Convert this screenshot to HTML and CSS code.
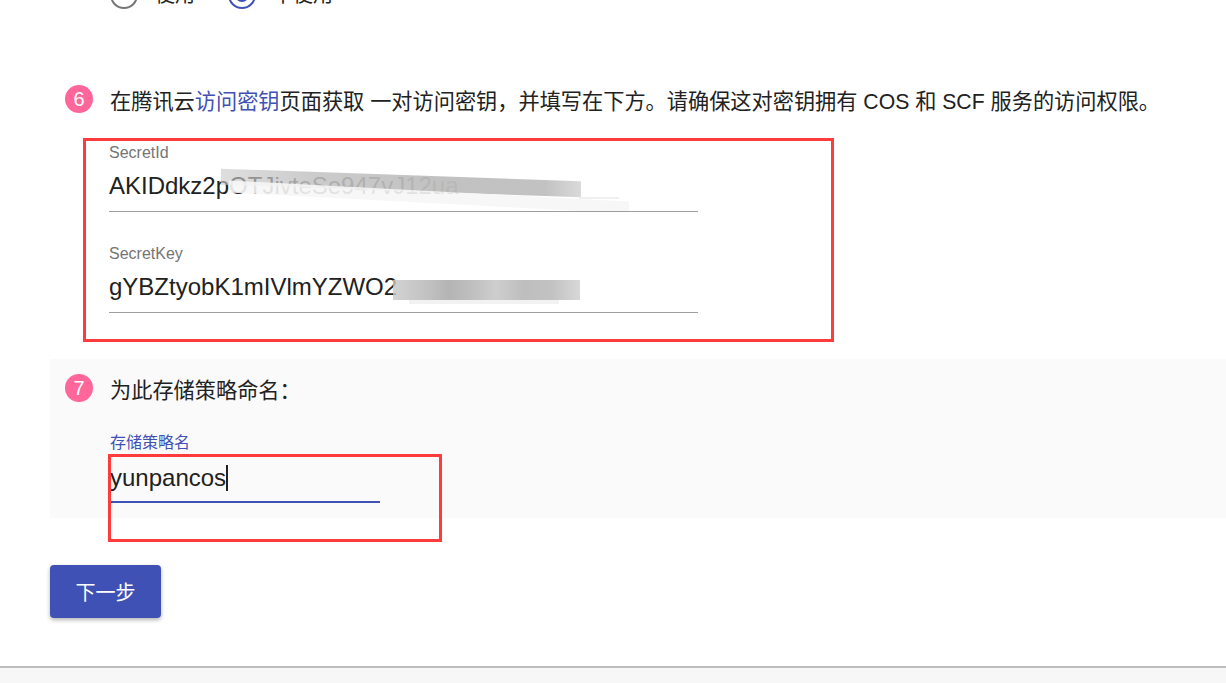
FILE: index.html
```html
<!DOCTYPE html>
<html lang="zh-CN">
<head>
  <meta charset="UTF-8">
  <title>存储策略</title>
  <link rel="stylesheet" href="styles.css">
</head>
<body>
<div class="page">
  <div class="radio-row">
    <label class="radio"><span class="radio-dot"></span>使用</label>
    <label class="radio checked"><span class="radio-dot"></span>不使用</label>
  </div>

  <div class="step step-keys">
    <div class="step-head">
      <span class="badge">6</span>
      <span class="step-title">在腾讯云<a href="#" class="link">访问密钥</a>页面获取 一对访问密钥，并填写在下方。请确保这对密钥拥有 COS 和 SCF 服务的访问权限。</span>
    </div>
    <div class="mark-box">
      <div class="field wide">
        <div class="field-label">SecretId</div>
        <div class="field-input">
          AKIDdkz2pOTJivteSe947vJ12ua
          <span class="smear smear-a"></span>
          <span class="smear smear-b"></span>
          <span class="smear smear-c"></span>
        </div>
      </div>
      <div class="field wide second">
        <div class="field-label">SecretKey</div>
        <div class="field-input">
          gYBZtyobK1mIVlmYZWO2
          <span class="smear smear-d"></span>
          <span class="smear smear-e"></span>
        </div>
      </div>
    </div>
  </div>

  <div class="step step-name">
    <div class="step-head">
      <span class="badge">7</span>
      <span class="step-title">为此存储策略命名：</span>
    </div>
    <div class="field narrow focused">
      <div class="field-label">存储策略名</div>
      <div class="field-input">yunpancos<span class="caret"></span></div>
      <span class="mark-overlay"></span>
    </div>
  </div>

  <button class="btn-next">下一步</button>
</div>
<footer class="bottom"></footer>
</body>
</html>
```

FILE: styles.css
```css
html, body {
  margin: 0;
  padding: 0;
  background: #fff;
  color: #212121;
  font-family: "Liberation Sans", "Noto Sans CJK SC", sans-serif;
  overflow: hidden;
  height: 100%;
}
.page {
  display: flow-root;
  padding-left: 50px;
  height: 666px;
  box-sizing: border-box;
}

/* radio row, mostly scrolled off the top */
.radio-row {
  display: flex;
  gap: 33px;
  margin-left: 60px;
  margin-top: -19px;
  height: 28px;
  font-size: 20px;
  line-height: 28px;
}
.radio {
  display: flex;
  align-items: center;
  gap: 17px;
  color: #212121;
}
.radio-dot {
  width: 28px;
  height: 28px;
  border: 2px solid #757575;
  border-radius: 50%;
  box-sizing: border-box;
  position: relative;
}
.radio.checked .radio-dot {
  border-color: #3f51b5;
}
.radio.checked .radio-dot::after {
  content: "";
  position: absolute;
  inset: 5px;
  border-radius: 50%;
  background: #3f51b5;
}

.step {
  padding: 15px 0 15px 15px;
}
.step-keys {
  margin-top: 61px;
  padding-bottom: 17px;
}
.step-name {
  background: #fafafa;
}
.step-head {
  display: flex;
  align-items: center;
  gap: 17px;
  height: 28px;
}
.badge {
  width: 28px;
  height: 28px;
  border-radius: 50%;
  background: #ff6699;
  color: #fff;
  font-size: 20px;
  line-height: 28px;
  text-align: center;
  flex: none;
}
.step-title {
  font-size: 21.2px;
  white-space: nowrap;
}
.link {
  color: #3f51b5;
  text-decoration: none;
}

.mark-box {
  margin-top: 25px;
  margin-left: 18px;
  width: 751px;
  box-sizing: border-box;
  border: 3px solid #ff3b3b;
  padding: 2px 0 26px 23px;
}
.field {
  position: relative;
}
.field.second {
  margin-top: 32px;
}
.step-name .field {
  margin-top: 31px;
  margin-left: 45px;
}
.field-label {
  font-size: 16px;
  line-height: 20px;
  color: #757575;
}
.field-input {
  position: relative;
  font-size: 24px;
  line-height: 30px;
  padding: 8px 0 10px;
  border-bottom: 1px solid #9e9e9e;
  white-space: nowrap;
  overflow: hidden;
}
.wide .field-input {
  width: 589px;
}
.narrow .field-input {
  width: 270px;
  padding: 10px 0 8px;
  overflow: visible;
}
.focused .field-label {
  color: #3f51b5;
}
.focused .field-input {
  border-bottom: 2px solid #3f51b5;
}
.caret {
  display: inline-block;
  width: 2px;
  height: 26px;
  background: #212121;
  vertical-align: -5px;
}

/* blurred parts of the keys */
.smear {
  position: absolute;
  background: #c4c4c4;
}
.smear-a {
  left: 112px;
  top: 12px;
  width: 360px;
  height: 16px;
  background: linear-gradient(90deg, rgba(200,200,200,0.6) 0, rgba(195,195,195,0.85) 25%, rgba(190,190,190,0.95) 60%, #c2c2c2 90%, #dadada 100%);
  transform: skewY(2deg);
}
.smear-b {
  left: 120px;
  top: 28px;
  width: 400px;
  height: 12px;
  background: rgba(246,246,246,0.9);
  transform: skewY(3deg);
}
.smear-c {
  left: 470px;
  top: 34px;
  width: 40px;
  height: 2px;
  background: #f0f0f0;
}
.smear-d {
  left: 284px;
  top: 16px;
  width: 187px;
  height: 20px;
  background: linear-gradient(90deg, rgba(200,200,200,0.8) 0, #c0c0c0 20%, #b4b4b4 30%, #c2c2c2 45%, #cecece 55%, #bebebe 70%, #c2c2c2 85%, #d8d8d8 100%);
}
.smear-e {
  left: 300px;
  top: 36px;
  width: 150px;
  height: 4px;
  background: #f2f2f2;
}

.mark-overlay {
  position: absolute;
  left: -2px;
  top: 21px;
  width: 334px;
  height: 88px;
  box-sizing: border-box;
  border: 3px solid #ff3b3b;
  pointer-events: none;
}

.btn-next {
  display: block;
  margin-top: 47px;
  width: 111px;
  height: 53px;
  border: none;
  border-radius: 4px;
  background: #3f51b5;
  color: #fff;
  font-family: "Noto Sans CJK SC", sans-serif;
  font-size: 20px;
  box-shadow: 0 2px 4px rgba(0,0,0,0.3);
  cursor: pointer;
}

.bottom {
  border-top: 2px solid #bdbdbd;
  background: #f7f7f7;
  height: 17px;
}
```
